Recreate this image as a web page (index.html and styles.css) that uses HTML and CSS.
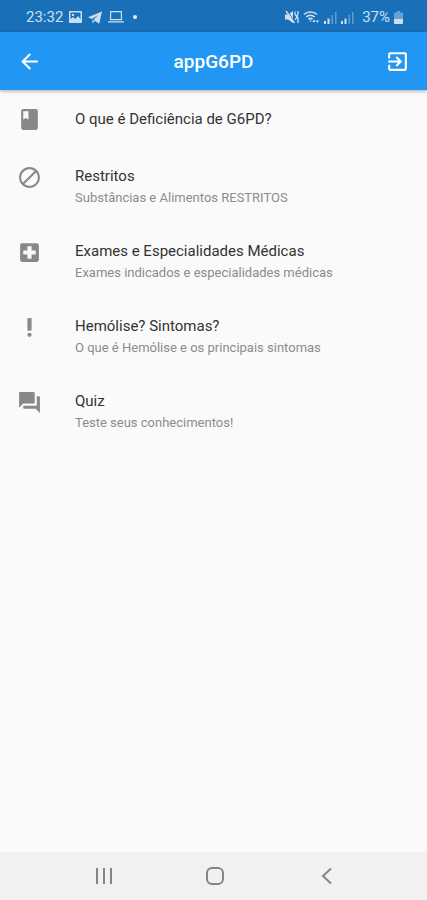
FILE: index.html
```html
<!DOCTYPE html>
<html lang="pt-BR">
<head>
    <meta charset="UTF-8">
    <meta name="viewport" content="width=device-width, initial-scale=1.0">
    <title>appG6PD</title>
    <link rel="stylesheet" href="styles.css">
</head>
<body>
    <div class="status-bar">
        <div class="status-left">
            <span class="clock">23:32</span>
            <svg width="13" height="12" viewBox="0 0 13 12"><path fill="currentColor" fill-rule="evenodd" d="M1 0h11a1 1 0 0 1 1 1v10a1 1 0 0 1-1 1H1a1 1 0 0 1-1-1V1a1 1 0 0 1 1-1zm.5 1.500v6.800L4 6l2.400 2L9 5l2.500 3V1.500zM3 3h2v2H3z"/></svg>
            <svg width="14" height="13" viewBox="0 0 14 13"><path fill="currentColor" d="M14 .5L0 6.300l4 1.600 6-3.900-4.500 4.900 5.700 3.800zM4.500 8.800v3.700l2-2.200z"/></svg>
            <svg width="16" height="12" viewBox="0 0 16 12"><path fill="none" stroke="currentColor" stroke-width="1.200" d="M2.600.6h10.800v8H2.600zM0 10.800h16"/></svg>
            <span class="dot"></span>
        </div>
        <div class="status-right">
            <svg width="14" height="14" viewBox="0 0 14 14"><path fill="currentColor" d="M0 4.500h3L8 1v12L3 9.500H0z"/><path fill="none" stroke="#1a70b8" d="M2.500 1l8 12"/><path fill="none" stroke="currentColor" stroke-width="1.300" d="M1 1l8.500 12M10 1.500v3l1.500 1.500v2L10 9.500M13 1v3l-1 2 1 2v5"/></svg>
            <svg width="17" height="14" viewBox="0 0 17 14"><path fill="none" stroke="currentColor" stroke-width="1.600" d="M1 4.500c3.500-3.400 9.500-3.400 13 0M3.200 7c2.500-2.300 6-2.300 8.500 0M5.500 9.300c1.300-1.100 2.700-1.100 4 0"/><path fill="currentColor" d="M6.300 10.500h2.400L7.500 12zM11 9.500L9.300 12h3.400zM14.500 13l-1.700-2.500h3.400z"/></svg>
            <svg class="signal" width="13" height="13" viewBox="0 0 13 13"><path fill="currentColor" d="M0 10h2v3H0zM3.500 7.500h2V13h-2z"/><path fill="currentColor" opacity=".4" d="M7.500 4h1.500v9H7.500zM11 1h1.500v12H11z"/></svg>
            <svg class="signal" width="13" height="13" viewBox="0 0 13 13"><path fill="currentColor" d="M0 10h2v3H0zM3.500 7.500h2V13h-2z"/><path fill="currentColor" opacity=".4" d="M7.500 4h1.500v9H7.500zM11 1h1.500v12H11z"/></svg>
            <span class="battery-level">37%</span>
            <svg width="9" height="13" viewBox="0 0 9 13"><path fill="currentColor" opacity=".45" d="M3 0h3v1.500h2a1 1 0 0 1 1 1V8H0V2.500a1 1 0 0 1 1-1h2z"/><path fill="currentColor" d="M0 8h9v4a1 1 0 0 1-1 1H1a1 1 0 0 1-1-1z"/></svg>
        </div>
    </div>

    <header class="app-bar">
        <button type="button" class="icon-btn" aria-label="Voltar">
            <svg class="icon" viewBox="0 0 24 24"><path d="M20 11H7.830l5.590-5.590L12 4l-8 8 8 8 1.410-1.410L7.830 13H20z"/></svg>
        </button>
        <h1>appG6PD</h1>
        <button type="button" class="icon-btn" aria-label="Sair">
            <svg class="icon" viewBox="0 0 24 24"><path d="M10.090 15.590L11.500 17l5-5-5-5-1.410 1.410L12.670 11H3v2h9.670l-2.580 2.590zM19 3H5c-1.110 0-2 .9-2 2v4h2V5h14v14H5v-4H3v4c0 1.100.89 2 2 2h14c1.100 0 2-.9 2-2V5c0-1.100-.9-2-2-2z"/></svg>
        </button>
    </header>

    <main class="menu">
        <a href="#deficiencia" class="tile tile-single">
            <svg class="icon" viewBox="0 0 24 24"><path d="M18 2H6c-1.100 0-2 .9-2 2v16c0 1.100.9 2 2 2h12c1.100 0 2-.9 2-2V4c0-1.100-.9-2-2-2zM6 4h5v8l-2.500-1.500L6 12V4z"/></svg>
            <span class="tile-text">
                <span class="tile-title">O que é Deficiência de G6PD?</span>
            </span>
        </a>
        <a href="#restritos" class="tile">
            <svg class="icon" viewBox="0 0 24 24"><path d="M12 2C6.500 2 2 6.500 2 12s4.500 10 10 10 10-4.500 10-10S17.500 2 12 2zM4 12c0-4.400 3.600-8 8-8 1.800 0 3.500.6 4.900 1.700L5.700 16.900C4.600 15.500 4 13.800 4 12zm8 8c-1.800 0-3.500-.6-4.900-1.700L18.300 7.100C19.400 8.500 20 10.200 20 12c0 4.400-3.600 8-8 8z"/></svg>
            <span class="tile-text">
                <span class="tile-title">Restritos</span>
                <span class="tile-subtitle">Substâncias e Alimentos RESTRITOS</span>
            </span>
        </a>
        <a href="#exames" class="tile">
            <svg class="icon" viewBox="0 0 24 24"><path d="M19 3H5c-1.100 0-2 .9-2 2v14c0 1.100.9 2 2 2h14c1.100 0 2-.9 2-2V5c0-1.100-.9-2-2-2zm-1 11h-4v4h-4v-4H6v-4h4V6h4v4h4v4z"/></svg>
            <span class="tile-text">
                <span class="tile-title">Exames e Especialidades Médicas</span>
                <span class="tile-subtitle">Exames indicados e especialidades médicas</span>
            </span>
        </a>
        <a href="#hemolise" class="tile">
            <svg class="icon" viewBox="0 0 24 24"><circle cx="12" cy="19" r="2"/><path d="M10 3h4v12h-4z"/></svg>
            <span class="tile-text">
                <span class="tile-title">Hemólise? Sintomas?</span>
                <span class="tile-subtitle">O que é Hemólise e os principais sintomas</span>
            </span>
        </a>
        <a href="#quiz" class="tile">
            <svg class="icon" viewBox="0 0 24 24"><path d="M21 6h-2v9H6v2c0 .55.45 1 1 1h11l4 4V7c0-.55-.45-1-1-1zm-4 6V3c0-.55-.45-1-1-1H3c-.55 0-1 .45-1 1v14l4-4h10c.55 0 1-.45 1-1z"/></svg>
            <span class="tile-text">
                <span class="tile-title">Quiz</span>
                <span class="tile-subtitle">Teste seus conhecimentos!</span>
            </span>
        </a>
    </main>

    <nav class="nav-bar">
        <button type="button" class="nav-btn" aria-label="Recentes">
            <svg width="18" height="18" viewBox="0 0 18 18"><path d="M2 1v16M9 1v16M16 1v16"/></svg>
        </button>
        <button type="button" class="nav-btn" aria-label="Início">
            <svg width="18" height="18" viewBox="0 0 18 18"><rect x="1" y="1" width="16" height="16" rx="5"/></svg>
        </button>
        <button type="button" class="nav-btn" aria-label="Voltar">
            <svg width="18" height="18" viewBox="0 0 18 18"><path d="M14 1.500L6 9l8 7.500"/></svg>
        </button>
    </nav>
</body>
</html>
```
FILE: styles.css
```css
* {
    box-sizing: border-box;
}
body {
    margin: 0;
    min-height: 100vh;
    display: flex;
    flex-direction: column;
    background: #fafafa;
    font-family: Roboto, sans-serif;
}
svg {
    display: block;
    flex-shrink: 0;
}
button {
    border: none;
    background: none;
    padding: 0;
    color: inherit;
    cursor: pointer;
}
.icon {
    width: 25px;
    height: 25px;
    fill: currentColor;
}

/* Status bar */
.status-bar {
    display: flex;
    justify-content: space-between;
    align-items: center;
    height: 32px;
    padding: 2px 24px 0 26px;
    background: #1a70b8;
    color: #c9e0f3;
    font-size: 15px;
}
.status-left {
    display: flex;
    align-items: center;
    gap: 6px;
}
.status-right {
    display: flex;
    align-items: center;
    gap: 4px;
}
.dot {
    width: 4px;
    height: 4px;
    margin-left: 3px;
    border-radius: 50%;
    background: #e3f0fa;
}
.battery-level {
    margin-left: 4px;
}

/* App bar */
.app-bar {
    display: flex;
    justify-content: space-between;
    align-items: center;
    height: 58px;
    padding: 0 17px;
    background: #2196f3;
    color: #fff;
    box-shadow: 0 1px 4px rgba(0,0,0,0.35);
}
.app-bar h1 {
    margin: 0;
    font-size: 19px;
    font-weight: 500;
}

/* Menu */
.menu {
    flex: 1;
}
.tile {
    display: flex;
    align-items: flex-start;
    gap: 33px;
    padding: 17px;
    color: #888;
    text-decoration: none;
}
.tile-single {
    align-items: center;
    height: 58px;
}
.tile-text {
    display: flex;
    flex-direction: column;
    gap: 3px;
}
.tile-title {
    color: #333;
    font-size: 15px;
    line-height: 22px;
}
.tile-subtitle {
    color: #8c8c8c;
    font-size: 13px;
    line-height: 16px;
}

/* Navigation bar */
.nav-bar {
    display: flex;
    height: 48px;
    padding: 0 46px 0 48px;
    background: #f1f1f1;
}
.nav-btn {
    flex: 1;
    display: flex;
    justify-content: center;
    align-items: center;
}
.nav-btn svg {
    fill: none;
    stroke: #858585;
    stroke-width: 2;
}
```
